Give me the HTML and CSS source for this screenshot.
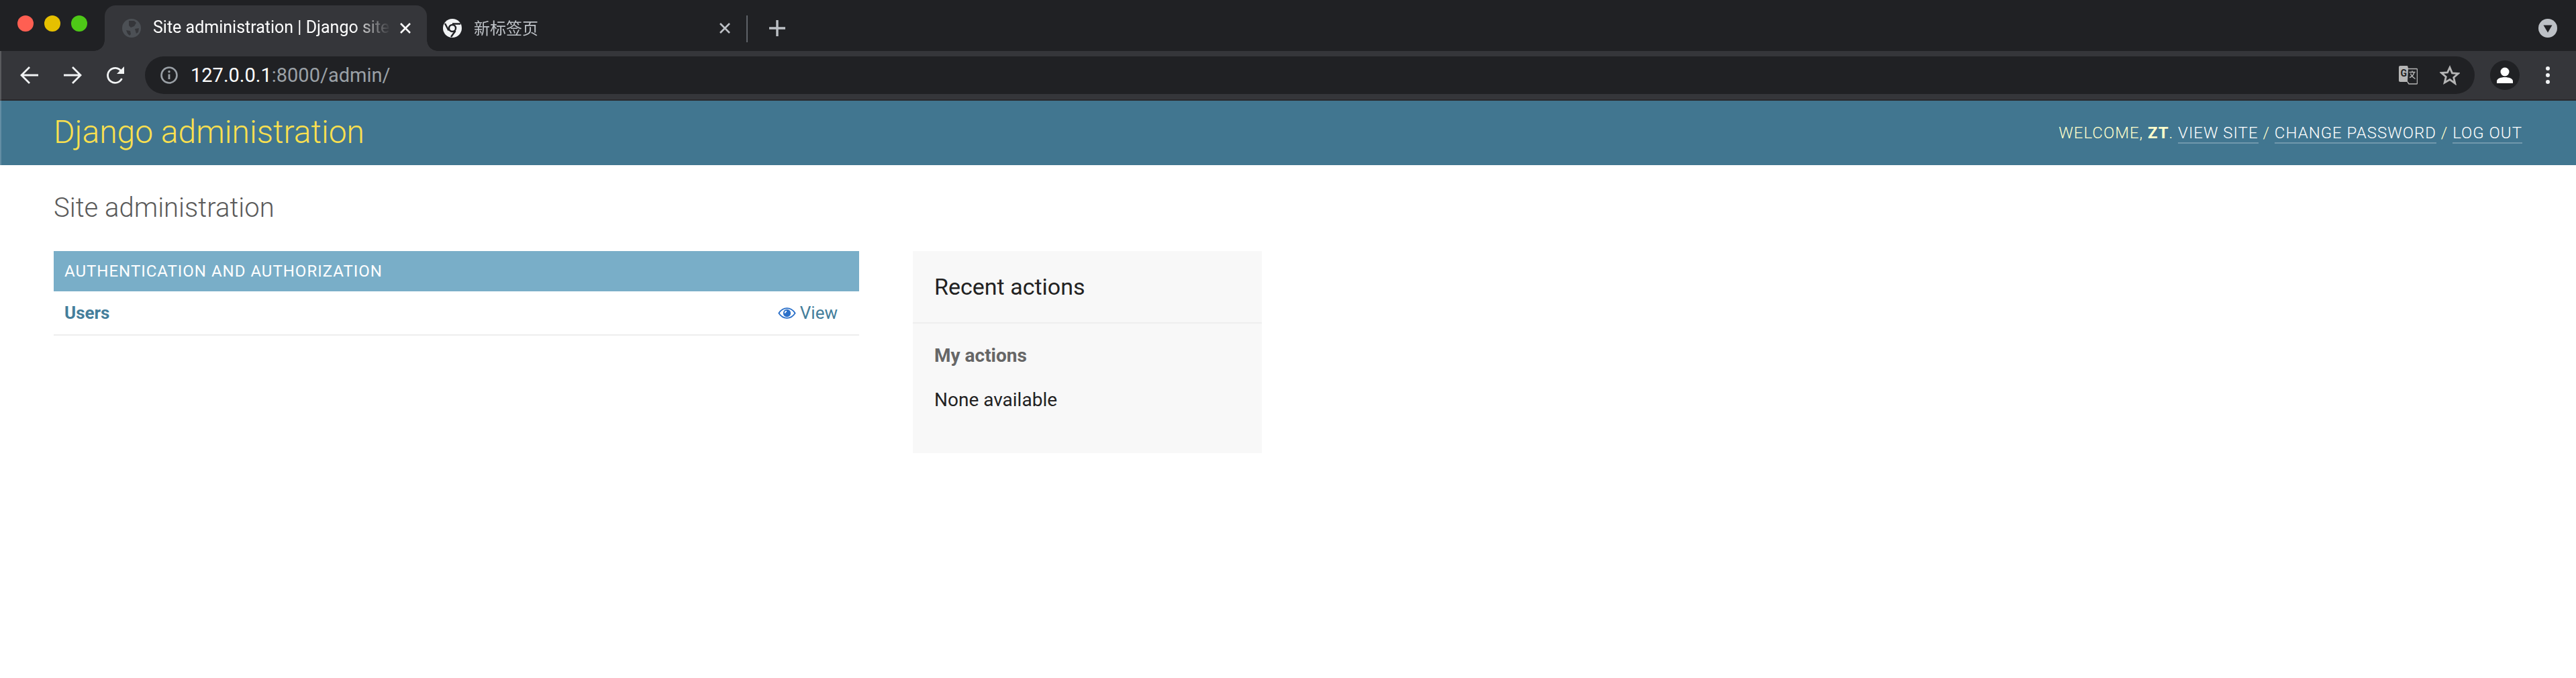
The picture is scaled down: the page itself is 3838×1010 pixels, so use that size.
FILE: index.html
```html
<!DOCTYPE html>
<html>
<head>
  <title>Site administration | Django site admin</title>
  <link rel="stylesheet" href="styles.css">
</head>
<body>
  <div class="tabstrip">
    <div class="lights">
      <span class="light light-red"></span>
      <span class="light light-yellow"></span>
      <span class="light light-green"></span>
    </div>
    <div class="tab tab-active">
      <svg class="favicon" viewBox="0 0 28 28">
        <circle cx="14" cy="14" r="14" fill="#4c5055"/>
        <path d="M10 3h8l3 3-3 5-5 2-3-3zM6 17l6 1 1 5-2 2-3-3zM19 15l6-1-1 6-3 2z" fill="#35363a"/>
      </svg>
      <span class="tab-title">Site administration | Django site admin</span>
      <svg class="tab-close" viewBox="0 0 20 20"><path d="M3 3l14 14M17 3L3 17" stroke="#fff" stroke-width="2.6" fill="none"/></svg>
    </div>
    <div class="tab tab-idle">
      <svg class="favicon" viewBox="0 0 28 28">
        <circle cx="14" cy="14" r="14" fill="#f1f3f4"/>
        <circle cx="14" cy="14" r="5" fill="#f1f3f4" stroke="#202124" stroke-width="2.4"/>
        <path d="M14 7.500h12M8.500 17.500L3 7M18.500 18L12 27" stroke="#202124" stroke-width="2.4" fill="none"/>
      </svg>
      <span class="tab-title">新标签页</span>
      <svg class="tab-close" viewBox="0 0 20 20"><path d="M3 3l14 14M17 3L3 17" stroke="#bdc1c6" stroke-width="2.6" fill="none"/></svg>
    </div>
    <span class="tab-sep"></span>
    <svg class="new-tab" viewBox="0 0 24 24"><path d="M12 0v24M0 12h24" stroke="#bdc1c6" stroke-width="3.4" fill="none"/></svg>
    <svg class="tab-search" viewBox="0 0 28 28">
      <circle cx="14" cy="14" r="14" fill="#bdc1c6"/>
      <path d="M7.500 9.500h13L14 20.500z" fill="#202124"/>
    </svg>
  </div>

  <div class="toolbar">
    <svg class="nav-icon" viewBox="0 0 28 28"><path d="M27 14H3M14 2L2 14l12 12" stroke="#f1f3f4" stroke-width="2.800" fill="none"/></svg>
    <svg class="nav-icon" viewBox="0 0 28 28"><path d="M1 14h24M14 2l12 12-12 12" stroke="#f1f3f4" stroke-width="2.800" fill="none"/></svg>
    <svg class="nav-icon" viewBox="0 0 28 28"><path d="M23.500 19a11 11 0 1 1-1-11" stroke="#f1f3f4" stroke-width="2.800" fill="none"/><path d="M27 1v11H16z" fill="#f1f3f4"/></svg>
    <div class="omnibox">
      <svg class="info-icon" viewBox="0 0 26 26">
        <circle cx="13" cy="13" r="11.500" stroke="#9aa0a6" stroke-width="2.600" fill="none"/>
        <path d="M13 11.500v7.500" stroke="#9aa0a6" stroke-width="2.800"/>
        <circle cx="13" cy="7.800" r="1.700" fill="#9aa0a6"/>
      </svg>
      <span class="url"><span class="url-host">127.0.0.1</span>:8000/admin/</span>
      <svg class="translate-icon" viewBox="0 0 28 28">
        <path d="M2 0h11l7 24H2a2 2 0 0 1-2-2V2a2 2 0 0 1 2-2z" fill="#b5b5b5"/>
        <path d="M14 4.500h12.500a1 1 0 0 1 1 1V26a1 1 0 0 1-1 1H15l-2-3" stroke="#b5b5b5" stroke-width="1.400" fill="#202124"/>
        <text x="2.500" y="16" class="translate-g">G</text>
        <path d="M15.500 9.500h9M20 7.500v2M23 9.500c-1 4-4 7-7 8M17.500 11.500c1 3 4 6 7 8" stroke="#b5b5b5" stroke-width="1.400" fill="none"/>
      </svg>
      <svg class="star-icon" viewBox="0 0 30 30">
        <path d="M15 3.500l3.500 8.300 9 .7-6.800 5.900 2.100 8.800L15 21.500l-7.800 4.700 2.100-8.800-6.800-5.900 9-.7z" stroke="#b5b5b5" stroke-width="2.800" fill="none"/>
      </svg>
    </div>
    <div class="avatar">
      <svg viewBox="0 0 24 24"><circle cx="12" cy="7" r="6.500" fill="#fff"/><path d="M0 24v-3c0-4 6-6 12-6s12 2 12 6v3z" fill="#fff"/></svg>
    </div>
    <div class="menu-dots"><span></span><span></span><span></span></div>
  </div>

  <div class="frame-line"></div>

  <header class="site-header">
    <h1 class="branding">Django administration</h1>
    <div class="user-tools">
      Welcome, <strong>ZT</strong>.
      <a href="#">View site</a> /
      <a href="#">Change password</a> /
      <a href="#">Log out</a>
    </div>
  </header>

  <main class="content">
    <h1 class="page-title">Site administration</h1>
    <div class="columns">
      <section class="module">
        <h2 class="module-caption">Authentication and Authorization</h2>
        <div class="module-row">
          <a class="row-name" href="#">Users</a>
          <a class="row-view" href="#">
            <svg class="eye" viewBox="0 0 28 18">
              <path d="M1.200 9C4.500 3.800 9 1.200 14 1.200S23.500 3.800 26.800 9C23.500 14.200 19 16.800 14 16.800S4.500 14.200 1.200 9z" stroke="#2b70c9" stroke-width="2" fill="#fff"/>
              <circle cx="14" cy="9" r="6" fill="#2b70c9"/>
              <path d="M13.500 5a4 4 0 0 0-3.500 4h1.800a2.400 2.400 0 0 1 1.700-2.200z" fill="#fff"/>
            </svg>
            View
          </a>
        </div>
      </section>
      <aside class="recent">
        <h2 class="recent-title">Recent actions</h2>
        <div class="recent-body">
          <h3 class="recent-sub">My actions</h3>
          <p class="recent-empty">None available</p>
        </div>
      </aside>
    </div>
  </main>
</body>
</html>
```

FILE: styles.css
```css
html, body {
  margin: 0;
  padding: 0;
}

body {
  background-color: #fff;
  font-family: Roboto, "Liberation Sans", "Noto Sans CJK SC", sans-serif;
  position: relative;
}

/* the window edge, lighter line down the left side */
body::before {
  content: "";
  position: absolute;
  left: 0;
  top: 0;
  width: 2px;
  height: 246px;
  background-color: rgba(255, 255, 255, 0.18);
}

.tabstrip {
  height: 76px;
  background-color: #202124;
  display: flex;
  align-items: flex-end;
  box-sizing: border-box;
  position: relative;
}

.lights {
  display: flex;
  gap: 16px;
  padding: 0 26px 29px 26px;
}

.light {
  width: 24px;
  height: 24px;
  border-radius: 50%;
}

.light-red { background-color: #ff5f52; }
.light-yellow { background-color: #e6c000; }
.light-green { background-color: #4ec817; }

.tab {
  height: 68px;
  width: 480px;
  box-sizing: border-box;
  display: flex;
  align-items: center;
  padding: 0 22px 0 26px;
  position: relative;
  font-size: 24px;
}

.tab-active {
  background-color: #35363a;
  border-radius: 16px 16px 0 0;
  color: #fff;
  font-size: 25px;
}

.tab-active::before,
.tab-active::after {
  content: "";
  position: absolute;
  bottom: 0;
  width: 16px;
  height: 16px;
}

.tab-active::before {
  left: -16px;
  background: radial-gradient(circle at 0 0, #202124 15.500px, #35363a 16px);
}

.tab-active::after {
  right: -16px;
  background: radial-gradient(circle at 100% 0, #202124 15.500px, #35363a 16px);
}

.tab-idle {
  color: #bdc1c6;
  width: 476px;
  padding-left: 24px;
}

.favicon {
  width: 28px;
  height: 28px;
  flex: none;
  margin-right: 18px;
}

.tab-title {
  flex: 1;
  white-space: nowrap;
  overflow: hidden;
  padding-bottom: 3px;
  -webkit-mask-image: linear-gradient(to right, #000 84%, transparent 100%);
  mask-image: linear-gradient(to right, #000 84%, transparent 100%);
}

.tab-close {
  width: 20px;
  height: 20px;
  flex: none;
  margin-left: 12px;
}

.tab-sep {
  width: 2px;
  height: 40px;
  background-color: #5f6368;
  margin-bottom: 13px;
}

.new-tab {
  width: 24px;
  height: 24px;
  margin: 0 0 22px 32px;
}

.tab-search {
  width: 28px;
  height: 28px;
  margin-left: auto;
  margin-right: 28px;
  margin-bottom: 20px;
}

.toolbar {
  height: 72px;
  background-color: #35363a;
  display: flex;
  align-items: center;
  box-sizing: border-box;
  padding-left: 30px;
  gap: 36px;
}

.nav-icon {
  width: 28px;
  height: 28px;
  flex: none;
}

.omnibox {
  width: 3471px;
  height: 56px;
  margin-left: -6px;
  background-color: #202124;
  border-radius: 28px;
  display: flex;
  align-items: center;
  padding: 0 22px 0 23px;
  box-sizing: border-box;
  flex: none;
}

.info-icon {
  width: 26px;
  height: 26px;
  margin-right: 19px;
  flex: none;
}

.url {
  color: #9aa0a6;
  font-size: 29px;
  flex: 1;
}

.url-host {
  color: #fff;
}

.translate-icon {
  width: 28px;
  height: 28px;
  margin-right: 33px;
}

.translate-g {
  font-size: 14px;
  font-weight: 700;
  fill: #202124;
}

.star-icon {
  width: 30px;
  height: 30px;
}

.avatar {
  width: 44px;
  height: 44px;
  border-radius: 50%;
  background-color: #202124;
  display: flex;
  align-items: center;
  justify-content: center;
  margin-left: -13px;
  flex: none;
}

.avatar svg {
  width: 24px;
  height: 24px;
}

.menu-dots {
  display: flex;
  flex-direction: column;
  gap: 4px;
  margin-left: 3px;
}

.menu-dots span {
  width: 6px;
  height: 6px;
  border-radius: 50%;
  background-color: #f1f3f4;
}

.frame-line {
  height: 2px;
  background-color: #29292c;
}

.site-header {
  height: 96px;
  background-color: #417690;
  color: #ffc;
  display: flex;
  align-items: center;
  justify-content: space-between;
  padding: 0 80px;
}

.branding {
  margin: 0 0 4px;
  font-size: 48px;
  font-weight: 300;
  color: #fbe04f;
}

.user-tools {
  font-size: 24px;
  font-weight: 300;
  letter-spacing: 1px;
  text-transform: uppercase;
}

.user-tools strong {
  font-weight: 700;
}

.user-tools a {
  color: #fff;
  text-decoration: none;
  border-bottom: 2px solid rgba(255, 255, 255, 0.25);
}

.content {
  padding: 40px 80px;
}

.page-title {
  margin: 0 0 40px;
  font-size: 40px;
  font-weight: 300;
  color: #5a5a5a;
  line-height: 48px;
}

.columns {
  display: flex;
  gap: 80px;
  align-items: flex-start;
}

.module {
  width: 1200px;
}

.module-caption {
  margin: 0;
  height: 60px;
  line-height: 60px;
  padding: 0 16px;
  background-color: #79aec8;
  color: #fff;
  font-size: 24px;
  font-weight: 400;
  letter-spacing: 1px;
  text-transform: uppercase;
}

.module-row {
  height: 64px;
  display: flex;
  align-items: center;
  justify-content: space-between;
  padding: 0 32px 0 16px;
  border-bottom: 2px solid #eee;
  font-size: 26px;
}

.row-name {
  color: #447e9b;
  font-weight: 700;
  text-decoration: none;
}

.row-view {
  color: #447e9b;
  display: flex;
  align-items: center;
  gap: 6px;
  text-decoration: none;
}

.eye {
  width: 27px;
  height: 17px;
}

.recent {
  width: 520px;
  height: 301px;
  background-color: #f8f8f8;
}

.recent-title {
  margin: 0;
  height: 106px;
  line-height: 106px;
  padding: 0 32px;
  font-size: 34px;
  font-weight: 400;
  color: #222;
  border-bottom: 2px solid #eee;
}

.recent-body {
  padding: 32px 32px;
}

.recent-sub {
  margin: 0 0 34px;
  font-size: 28px;
  line-height: 32px;
  font-weight: 700;
  color: #666;
}

.recent-empty {
  margin: 0;
  font-size: 28px;
  line-height: 32px;
  color: #222;
}
```
